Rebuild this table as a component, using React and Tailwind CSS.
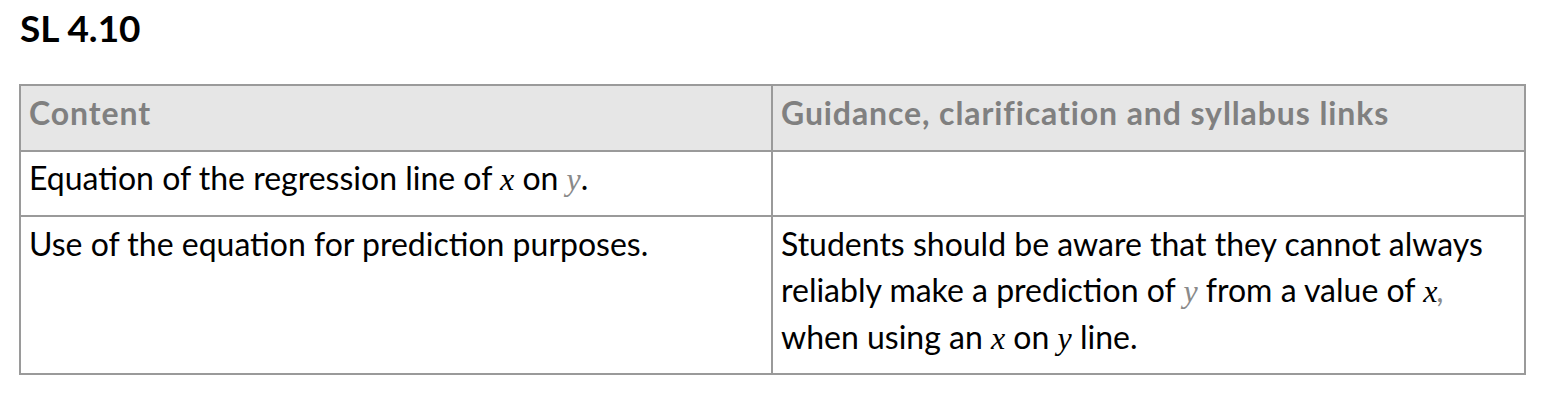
import React from "react";

const M = ({ children, grey }) => (
  <span
    className={`italic ${grey ? "text-[#8a8a8a]" : "text-black"}`}
    style={{ fontFamily: '"Liberation Serif", "Times New Roman", serif' }}
  >
    {children}
  </span>
);

export default function App() {
  return (
    <div
      className="w-[1556px] h-[406px] bg-white text-black"
      style={{ fontFamily: 'Lato, "Open Sans", sans-serif' }}
    >
      <div className="pl-[20px] pt-[8px] text-[37px] leading-[40px] font-bold">SL 4.10</div>
      <div className="ml-[19px] mt-[36px] w-[1507px] border-2 border-[#9a9a9a]">
        <div className="grid grid-cols-[752px_1fr] bg-[#e6e6e6] border-b-2 border-[#9a9a9a] h-[66px]">
          <div className="border-r-2 border-[#9a9a9a] pl-[8px] pt-[7px] text-[32px] leading-[40px] font-bold tracking-[0.9px] text-[#808080]">Content</div>
          <div className="pl-[8px] pt-[7px] text-[32px] leading-[40px] font-bold tracking-[0.9px] text-[#808080]">Guidance, clarification and syllabus links</div>
        </div>
        <div className="grid grid-cols-[752px_1fr] border-b-2 border-[#9a9a9a] h-[65px]">
          <div className="border-r-2 border-[#9a9a9a] pl-[8px] pt-[3px] text-[32px] leading-[46px]">
            Equation of the regression line of <M>x</M> on <M grey>y</M>.
          </div>
          <div />
        </div>
        <div className="grid grid-cols-[752px_1fr] h-[156px]">
          <div className="border-r-2 border-[#9a9a9a] pl-[8px] pt-[4px] text-[32px] leading-[45.5px]">
            Use of the equation for prediction purposes.
          </div>
          <div className="pl-[8px] pt-[4px] text-[32px] leading-[45.5px]">
            Students should be aware that they cannot always
            <br />
            reliably make a prediction of <M grey>y</M> from a value of <M>x</M><span className="text-[#8a8a8a] italic">,</span>
            <br />
            when using an <M>x</M> on <M>y</M> line.
          </div>
        </div>
      </div>
    </div>
  );
}
